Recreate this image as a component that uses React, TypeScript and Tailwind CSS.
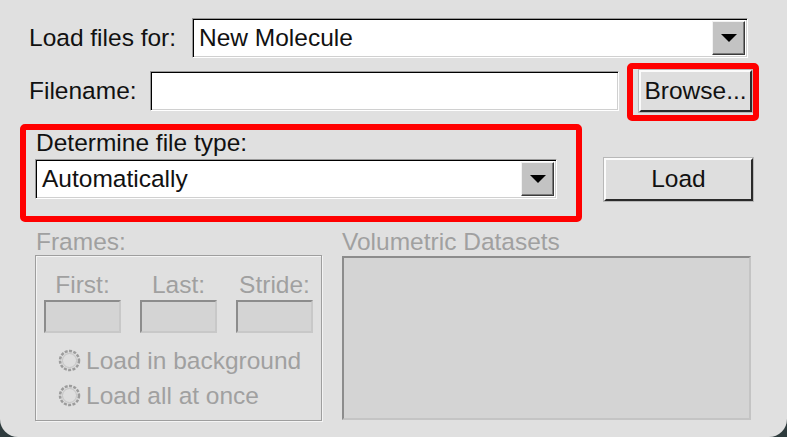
import React from "react";

const sunken =
  "border border-t-[#9a9a9a] border-l-[#9a9a9a] border-b-white border-r-white shadow-[inset_1px_1px_0_#000,inset_-1px_-1px_0_#d0d0d0]";

function Arrow() {
  return (
    <div className="ml-auto flex w-[33px] items-center justify-center border border-t-[#f2f2f2] border-l-[#f2f2f2] border-b-[#3a3a3a] border-r-[#3a3a3a] bg-[#c3c3c3] shadow-[inset_-1px_-1px_0_#7a7a7a]">
      <svg width="18" height="10" viewBox="0 0 18 10">
        <polygon points="1,1 17,1 9,9" fill="#000" />
      </svg>
    </div>
  );
}

function Combo({ text, className }: { text: string; className: string }) {
  return (
    <div className={`flex bg-white py-[2px] pr-[2px] ${sunken} ${className}`}>
      <span className="self-center pl-[6px] leading-[36px] text-[#111]">{text}</span>
      <Arrow />
    </div>
  );
}

function RaisedButton({ label, className }: { label: string; className: string }) {
  return (
    <div
      className={`flex items-center justify-center bg-[#dedede] border-2 border-t-[#fbfbfb] border-l-[#fbfbfb] border-b-[#2a2a2a] border-r-[#2a2a2a] shadow-[0_0_0_1px_#b8b8b8] text-[#111] ${className}`}
    >
      {label}
    </div>
  );
}

function DisabledEntry() {
  return (
    <div className="mt-[3px] h-[33px] w-[77px] bg-[#d4d4d4] border-2 border-t-[#8c8c8c] border-l-[#8c8c8c] border-b-[#c8c8c8] border-r-[#c8c8c8]" />
  );
}

function Radio({ label }: { label: string }) {
  return (
    <div className="flex h-[35px] items-center pl-[14px]">
      <svg width="23" height="23" viewBox="0 0 23 23">
        <circle cx="11.5" cy="11.5" r="9.5" fill="#dcdcdc" stroke="#9c9c9c" strokeWidth="2.5" strokeDasharray="3 1.4" />
        <circle cx="11.5" cy="11.5" r="7" fill="#dedede" stroke="#c4c4c4" strokeWidth="1" />
      </svg>
      <span className="ml-[5px] leading-[35px] text-[#a0a0a0]">{label}</span>
    </div>
  );
}

export default function App() {
  return (
    <div
      className="h-[437px] w-[787px] overflow-hidden bg-[#2e3b3d]"
      style={{ fontFamily: '"Liberation Sans", Arial, sans-serif' }}
    >
      <div className="relative h-full w-full rounded-b-[18px] bg-[#e0e0e0] pt-[18px] text-[24.5px]">
        {/* Row 1 */}
        <div className="flex h-[40px] items-center pl-[29px] pr-[39px]">
          <span className="w-[163px] shrink-0 leading-[40px] text-[#111]">Load files for:</span>
          <Combo text="New Molecule" className="h-[40px] flex-1" />
        </div>

        {/* Row 2 */}
        <div className="mt-[12px] flex h-[42px] items-center pl-[29px] pr-[35px]">
          <span className="w-[121px] shrink-0 leading-[40px] text-[#111]">Filename:</span>
          <div className={`h-[40px] w-[469px] bg-white ${sunken}`} />
          <RaisedButton label="Browse..." className="ml-[20px] h-[42px] w-[113px]" />
        </div>

        {/* Row 3 */}
        <div className="mt-[19px] flex pl-[35px]">
          <div className="w-[522px]">
            <div className="pl-[1px] leading-[24px] text-[#111]">Determine file type:</div>
            <Combo text="Automatically" className="mt-[4px] h-[40px] w-[522px]" />
          </div>
          <RaisedButton label="Load" className="ml-[47px] mt-[27px] h-[43px] w-[149px]" />
        </div>

        {/* Row 4 */}
        <div className="mt-[29px] flex gap-[20px] pl-[35px]">
          <div className="w-[287px]">
            <div className="pl-[1px] leading-[24px] text-[#a0a0a0]">Frames:</div>
            <div className="mt-[1px] h-[166px] w-[287px] border border-[#9e9e9e] pt-[17px] pl-[8px] shadow-[1px_1px_0_#f4f4f4,inset_1px_1px_0_#f4f4f4]">
              <div className="flex gap-[19px]">
                {["First:", "Last:", "Stride:"].map((l) => (
                  <div key={l} className="flex w-[77px] flex-col items-center">
                    <span className="leading-[24px] text-[#a0a0a0]">{l}</span>
                    <DisabledEntry />
                  </div>
                ))}
              </div>
              <div className="mt-[10px]">
                <Radio label="Load in background" />
                <Radio label="Load all at once" />
              </div>
            </div>
          </div>
          <div className="w-[409px]">
            <div className="leading-[24px] text-[#a0a0a0]">Volumetric Datasets</div>
            <div className="mt-[2px] h-[164px] w-[409px] bg-[#d4d4d4] border-2 border-t-[#8c8c8c] border-l-[#8c8c8c] border-b-[#c4c4c4] border-r-[#c4c4c4]" />
          </div>
        </div>

        {/* Red highlight annotations */}
        <div className="pointer-events-none absolute left-[627px] top-[63px] h-[58px] w-[132px] rounded-[5px] border-[6px] border-[#ff0000]" />
        <div className="pointer-events-none absolute left-[20px] top-[124px] h-[98px] w-[562px] rounded-[5px] border-[6px] border-[#ff0000]" />
      </div>
    </div>
  );
}
